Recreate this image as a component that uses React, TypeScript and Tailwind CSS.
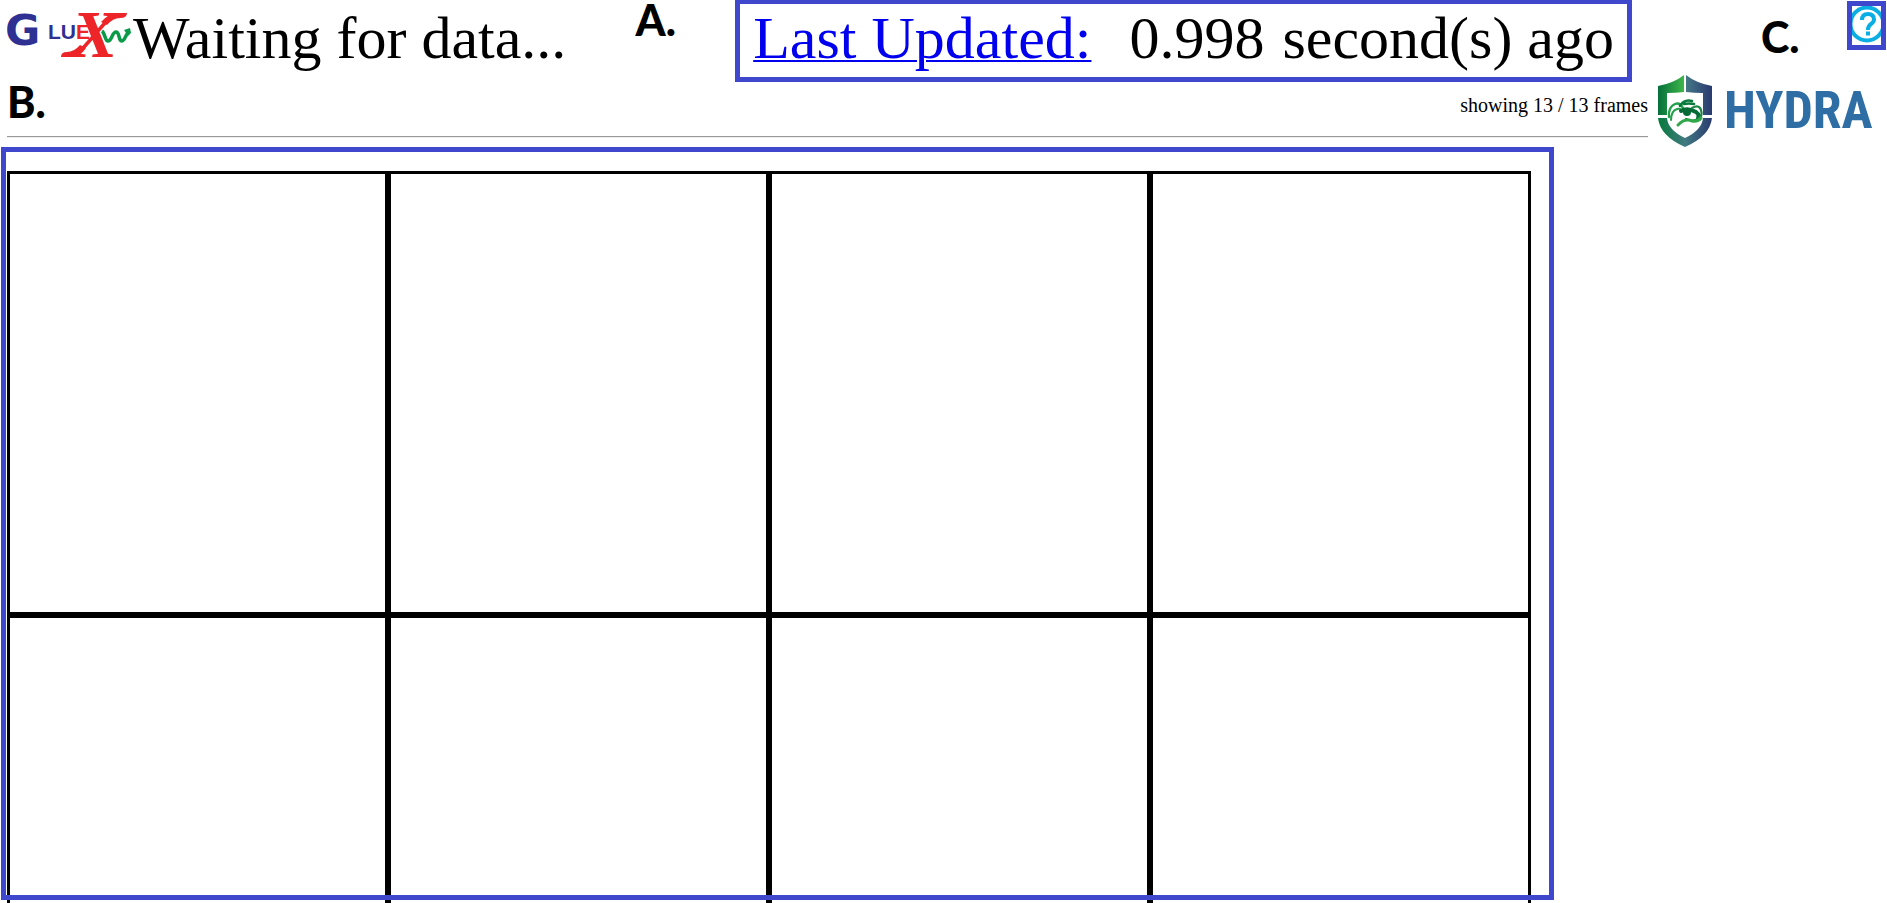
import React from "react";

const FRAME_COUNT = 13;

function GluexLogo() {
  return (
    <svg viewBox="0 0 126 60" className="h-[60px] w-[126px] shrink-0" role="img" aria-label="GlueX">
      <text x="-2" y="45" fontSize="43" fontWeight="700" fill="#2e3192" fontFamily="DejaVu Sans, sans-serif">G</text>
      <text x="41" y="39" fontSize="21" fontWeight="700" fontFamily="Liberation Sans, sans-serif">
        <tspan fill="#2e3192">LU</tspan>
        <tspan fill="#ed2428">E</tspan>
      </text>
      <path d="M54 57Q54 52 60 52Q67 52 73 45L79 48Q73 57 65 57Z" fill="#ed2428" />
      <path d="M120 13Q120 18 113 18Q106 18 100 25L94 22Q101 14 109 13Z" fill="#ed2428" />
      <text x="65" y="57" fontSize="68" fontWeight="700" fontStyle="italic" fill="#ed2428" fontFamily="Liberation Serif, serif">X</text>
      <path d="M95 31c3 2 3 10 6 10c4 0 4-9 8-9c4 0 2 9 6 9c3 0 4-8 7-9" fill="none" stroke="#0b9a48" strokeWidth="3.5" />
      <path d="M117 30l6-2l1 5l-3 3z" fill="#0b9a48" />
    </svg>
  );
}

function HydraLogo() {
  return (
    <a href="#hydra" aria-label="Hydra" className="flex items-center gap-3">
      <svg viewBox="0 0 54 72" className="h-[72px] w-[54px] shrink-0" aria-hidden="true">
        <defs>
          <linearGradient id="shieldGreen" x1="0" x2="1">
            <stop offset="0" stopColor="#05703a" />
            <stop offset="1" stopColor="#3fb649" />
          </linearGradient>
          <linearGradient id="shieldBlue" x1="0" x2="1">
            <stop offset="0" stopColor="#457786" />
            <stop offset="1" stopColor="#2a3a70" />
          </linearGradient>
          <linearGradient id="shieldBase" x1="0" x2="1">
            <stop offset="0" stopColor="#057a3a" />
            <stop offset="0.5" stopColor="#417a80" />
            <stop offset="1" stopColor="#2a3a70" />
          </linearGradient>
        </defs>
        <path d="M0 11Q16 8 26 0V17Q18 18 9 18V40H0Z" fill="url(#shieldGreen)" />
        <path d="M28 0Q38 8 54 11V40H45V18Q36 18 28 17Z" fill="url(#shieldBlue)" />
        <path d="M0 43H9Q10 55 27 63Q44 55 45 43H54Q52 61 27 72Q2 61 0 43Z" fill="url(#shieldBase)" />
        <g fill="none" strokeLinecap="round">
          <path d="M11 42Q10 32 17 29Q22 27 25 33" stroke="#22a04a" strokeWidth="2.4" />
          <path d="M13 45Q13 36 19 34Q23 33 27 38" stroke="#22a04a" strokeWidth="2" />
          <path d="M22 31Q26 24 34 26M26 29Q31 28 36 29" stroke="#087a3c" strokeWidth="2.6" />
          <path d="M23 36Q29 32 38 37Q42 40 40 43" stroke="#066b36" strokeWidth="4" />
          <path d="M34 33Q41 29 43 35Q45 41 40 44Q35 47 28 44" stroke="#1c8545" strokeWidth="2.2" />
          <path d="M20 50Q27 43 34 46Q40 47 43 43" stroke="#30a84a" strokeWidth="3" />
        </g>
        <circle cx="29" cy="37" r="4" fill="#066b36" />
      </svg>
      <span className="font-['Roboto_Condensed','Liberation_Sans_Narrow','Liberation_Sans',sans-serif] text-[52px] leading-[60px] font-bold text-[#2f6ea5]">
        HYDRA
      </span>
    </a>
  );
}

function HelpButton() {
  return (
    <button
      type="button"
      aria-label="Help"
      className="flex h-[49px] w-[39px] items-center justify-center overflow-hidden border-[5px] border-[#3f48cc] bg-white"
    >
      <svg viewBox="0 0 29 39" className="h-[39px] w-[29px] shrink-0" fill="none" stroke="#0aaee3" aria-hidden="true">
        <circle cx="15" cy="18" r="16.5" strokeWidth="4" />
        <path d="M10 14Q10 8 16 8Q22 8 22 13.500Q22 16 19 18Q16 20 16 24" strokeWidth="4" />
        <path d="M14 27.500H18" strokeWidth="4" />
      </svg>
    </button>
  );
}

function Marker({ children }: { children: React.ReactNode }) {
  return <span className="font-[Lato,sans-serif] text-[43px] leading-10 font-black">{children}</span>;
}

export default function App() {
  return (
    <main className="flex h-screen flex-col overflow-hidden bg-white font-['Liberation_Serif',serif] text-black">
      <header className="flex h-[147px] shrink-0">
        <div className="flex min-w-0 flex-1 flex-col pl-[7px]">
          <div className="flex h-[82px] items-start pr-4 whitespace-nowrap">
            <GluexLogo />
            <h1 className="mt-1 text-[60px] leading-[69px]">Waiting for data...</h1>
            <div className="flex flex-1 justify-center pl-[10px]">
              <Marker>A.</Marker>
            </div>
            <div className="flex h-[82px] gap-[38px] border-[5px] border-t-4 border-[#3f48cc] px-[13px] text-[60px] leading-[69px]">
              <a href="#updated" className="text-[#0000ee] underline decoration-2 underline-offset-2">Last Updated:</a>
              <span className="flex gap-[18px]">
                <span>0.998</span>
                <span>second(s) ago</span>
              </span>
            </div>
          </div>
          <div className="flex h-[54px] justify-between">
            <Marker>B.</Marker>
            <p className="pt-[11px] text-[20px] leading-6">showing 13 / 13 frames</p>
          </div>
          <hr className="h-[2px] border-t border-b border-t-[#999999] border-b-[#eeeeee]" />
        </div>
        <div className="flex w-[239px] shrink-0 flex-col pl-[10px]">
          <div className="flex h-[75px] items-start justify-between pt-px pr-px pl-[103px]">
            <div className="pt-4">
              <Marker>C.</Marker>
            </div>
            <HelpButton />
          </div>
          <HydraLogo />
        </div>
      </header>
      <section aria-label="Frames" className="relative mr-[333px] mb-[3px] ml-px min-h-0 flex-1 pt-6 pr-[23px] pl-[6px]">
        <div className="grid grid-cols-4">
          {Array.from({ length: FRAME_COUNT }, (_, i) => (
            <div key={i} className="h-[444px] border-[3px] border-black" />
          ))}
        </div>
        <div className="pointer-events-none absolute inset-0 border-[5px] border-[#3f48cc]" />
      </section>
    </main>
  );
}
